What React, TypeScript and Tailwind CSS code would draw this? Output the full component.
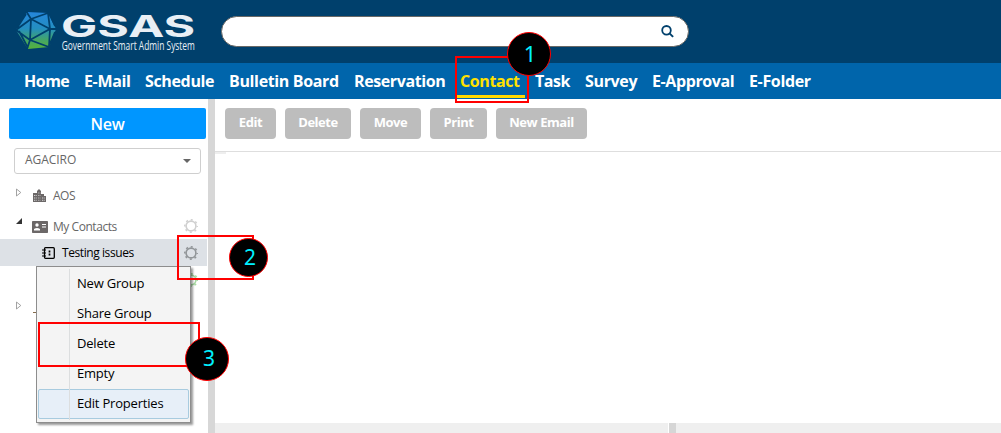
import type { ReactNode } from "react";

const navItems = [
  { label: "Home", width: "w-[60px]", tracking: "tracking-[-0.5px]" },
  { label: "E-Mail", width: "w-[61px]", tracking: "tracking-[-0.35px]" },
  { label: "Schedule", width: "w-[84px]", tracking: "tracking-[-0.35px]" },
  { label: "Bulletin Board", width: "w-[125px]", tracking: "tracking-[-0.35px]" },
  { label: "Reservation", width: "w-[106px]", tracking: "tracking-[-0.4px]" },
  { label: "Contact", width: "w-[75px]", active: true, tracking: "tracking-[-0.4px]" },
  { label: "Task", width: "w-[50px]", tracking: "tracking-[-0.5px]" },
  { label: "Survey", width: "w-[67px]", tracking: "tracking-[-0.35px]" },
  { label: "E-Approval", width: "w-[97px]", tracking: "tracking-[-0.4px]" },
  { label: "E-Folder", width: "w-[80px]", tracking: "tracking-[-0.35px]" },
];

const actions = [
  { label: "Edit", width: "w-[51px]" },
  { label: "Delete", width: "w-[66px]" },
  { label: "Move", width: "w-[61px]" },
  { label: "Print", width: "w-[57px]" },
  { label: "New Email", width: "w-[91px]" },
];

const menuItems = ["New Group", "Share Group", "Delete", "Empty", "Edit Properties"];

function LogoMark() {
  return (
    <svg className="h-10 w-[42px] shrink-0" viewBox="0 0 42 40">
      <defs>
        <linearGradient id="mark" x1="0" y1="0" x2="0" y2="1">
          <stop offset="0" stopColor="#2586dc" />
          <stop offset="0.45" stopColor="#248fc0" />
          <stop offset="0.75" stopColor="#43a568" />
          <stop offset="1" stopColor="#57b33a" />
        </linearGradient>
      </defs>
      <path d="M12 2 33 3 41 19 34 37 13 39 1 20Z" fill="url(#mark)" />
      <g fill="none" stroke="#00406c" strokeWidth="1.8">
        <path d="M11 1 16 9 33 3M16 9 1 20M16 9 35 19 33 3M16 9 15 30 35 19 42 19M15 30 1 20M15 30 12 39M15 30 34 37 35 19M4 21 13 38M2 18 11 4M35 5 40 16M40 22 35 34" />
      </g>
    </svg>
  );
}

function Gear({ color }: { color: string }) {
  return (
    <svg className="size-4" viewBox="0 0 16 16" fill="none" stroke={color}>
      <circle cx="8" cy="8" r="4.9" strokeWidth="1.6" />
      <circle cx="8" cy="8" r="6.2" strokeWidth="1.6" strokeDasharray="2 2.87" strokeDashoffset="1" />
    </svg>
  );
}

function Badge({ children, place }: { children: ReactNode; place: string }) {
  return (
    <div className={`absolute flex items-center justify-center rounded-full border border-[#f00] bg-black font-['Noto_Sans',sans-serif] text-[#00f0ff] ${place}`}>
      {children}
    </div>
  );
}

function Collapsed() {
  return (
    <svg className="h-[9px] w-[6px]" viewBox="0 0 6 9">
      <path d="M.5 1v7L4.8 4.5Z" fill="none" stroke="#999" strokeWidth=".9" />
    </svg>
  );
}

function Sidebar() {
  return (
    <aside className="flex w-[208px] shrink-0 flex-col text-[12px] text-[#666]">
      <button className="mt-[9px] ml-[9px] h-[31px] w-[197px] rounded-[2px] bg-[#0096ff] text-[16px] font-semibold leading-[32px] tracking-[-0.3px] text-white">New</button>
      <div className="mt-[9px] ml-[14px] flex h-[26px] w-[187px] items-center justify-between rounded-[3px] border border-[#cfcfcf] pr-[9px] pb-[3px] pl-[10px]">
        <span className="tracking-[-0.05px]">AGACIRO</span>
        <svg className="mt-[2px] h-1 w-2" viewBox="0 0 8 4"><path d="M0 0h8L4 4Z" fill="#666" /></svg>
      </div>
      <div className="mt-[6px] flex h-[31px] items-center pl-4">
        <div className="mb-[7px] w-[17px]"><Collapsed /></div>
        <svg className="h-[13px] w-[13px]" viewBox="0 0 13 13">
          <path d="M0 4h4V2l2-2 2 2v3h3v2h2v6H0Z" fill="#6c6868" />
          <path d="M1 6.5h3M1 9h3M1 11.3h3M5.4 4h2M5.4 6.5h2M5.4 9h2M5.4 11.3h2M9 9h3M9 11.3h3" stroke="#fff" strokeWidth=".8" strokeDasharray=".9 .8" />
        </svg>
        <span className="ml-[7px] font-medium tracking-[-0.5px]">AOS</span>
      </div>
      <div className="flex h-[28px] items-center pl-4">
        <svg className="mb-[9px] h-[6px] w-[6px]" viewBox="0 0 6 6"><path d="M6 0v6H0Z" fill="#333" /></svg>
        <svg className="mt-[3px] ml-[10px] h-[12px] w-4" viewBox="0 0 16 12">
          <rect width="16" height="12" rx=".7" fill="#6c6868" />
          <circle cx="5" cy="4" r="1.7" fill="#fff" />
          <path d="M2 9.5V8q3-2 6 0v1.5ZM10 3h4v1h-4ZM10 5.5h4v1h-4Z" fill="#fff" />
        </svg>
        <span className="mt-[3px] ml-[5px] w-[130px] font-medium tracking-[-0.45px]">My Contacts</span>
        <div className="mt-[2px]"><Gear color="#d0d0d0" /></div>
      </div>
      <div className="flex h-[27px] w-[207px] items-center bg-[#dde1e6] pl-[42px] text-black">
        <svg className="mt-px h-[12px] w-[13px]" viewBox="0 0 13 12" fill="none" stroke="#000">
          <rect x="2.5" y=".7" width="9.8" height="10.6" rx="1" strokeWidth="1.3" />
          <path d="M0 3h4M0 6h4M0 9h4" strokeWidth="1.2" />
          <path d="M7.5 3.5v2M7.5 6.5v2" strokeWidth="1.7" />
        </svg>
        <span className="ml-[7px] w-[121px] font-medium tracking-[-0.42px]">Testing issues</span>
        <Gear color="#929699" />
      </div>
      <div className="flex h-[27px] items-center pl-[183px]"><Gear color="#a7d8a2" /></div>
      <div className="flex h-6 items-center pl-4">
        <div className="w-[17px]"><Collapsed /></div>
        <div className="mt-[14px] h-px w-3 bg-[#856b4b]" />
      </div>
    </aside>
  );
}

function ContextMenu() {
  return (
    <div className="absolute top-[266px] left-[36px] h-[157px] w-[155px] border border-[#8d8d8d] bg-[#f4f4f4] p-px pt-[2px] text-[13px] tracking-[-0.2px] text-black shadow-[2px_2px_2px_rgba(0,0,0,0.4)]">
      {menuItems.map((item) => (
        <div key={item} className={`flex h-[30px] items-center border pl-[38px] last:h-[33px] ${item === "Edit Properties" ? "rounded-[2px] border-[#a8cbdf] bg-[#e7eff8] pb-px" : "border-transparent"}`}>
          {item}
        </div>
      ))}
      <div className="absolute top-[2px] left-[32px] h-[151px] w-px bg-[#dcdedf]" />
    </div>
  );
}

export default function App() {
  return (
    <div className="relative flex h-[433px] w-[1001px] flex-col overflow-hidden bg-white font-['Open_Sans',sans-serif]">
      <header className="flex h-[63px] shrink-0 bg-[#00406c]">
        <div className="flex w-[221px] pt-[10px] pl-[15px]">
          <LogoMark />
          <div className="ml-[4px] h-[45px] w-[140px] text-[#e9eff5]">
            <div className="h-[28px] w-[82px] origin-left scale-x-[1.61] pt-[3px] font-['Inter',sans-serif] text-[30px] font-bold leading-[26px]">GSAS</div>
            <div className="w-[190px] origin-left scale-x-[0.7] pt-px pl-px whitespace-nowrap text-[12px] leading-[14px]">Government Smart Admin System</div>
          </div>
        </div>
        <div className="mt-4 flex h-[31px] w-[468px] items-center justify-end rounded-full border border-[#686866] bg-white pr-[14px]">
          <svg className="h-[13px] w-[13px]" viewBox="0 0 13 13" fill="none" stroke="#00406c" strokeWidth="1.8">
            <circle cx="5.5" cy="5.3" r="4.3" /><path d="m8.5 8.4 3.6 3.5" strokeWidth="2" />
          </svg>
        </div>
      </header>
      <nav className="flex h-9 shrink-0 bg-[#0065ab] pl-6 text-[16px] font-bold leading-[37px] text-white">
        {navItems.map((item) => (
          <a key={item.label} className={`whitespace-nowrap ${item.width} ${item.tracking} ${item.active ? "text-[#ffe100]" : ""}`}>{item.label}</a>
        ))}
      </nav>
      <div className="flex min-h-0 flex-1">
        <Sidebar />
        <div className="w-[7px] shrink-0 bg-[#d7d7d7]" />
        <main className="flex flex-1 flex-col">
          <div className="flex h-[53px] shrink-0 gap-[9px] border-b border-[#dedede] pt-[9px] pl-[10px]">
            {actions.map((item) => (
              <button key={item.label} className={`h-[31px] rounded-[4px] bg-[#bdbdbd] pb-[2px] text-[13px] font-bold tracking-[-0.45px] whitespace-nowrap text-white ${item.width}`}>{item.label}</button>
            ))}
          </div>
          <div className="h-[2px] w-[11px] bg-[#eeeeee]" />
          <div className="mt-auto flex h-[10px] bg-[#efefef] pl-[453px]">
            <div className="w-[8px] border-l border-white bg-[#d6d6d6]" />
          </div>
        </main>
      </div>
      <ContextMenu />
      <div className="absolute top-[95px] left-[457px] h-[3px] w-[68px] bg-[#ffd900]" />
      <div className="absolute top-[56px] left-[455px] h-[47px] w-[74px] border-2 border-[#f00]" />
      <div className="absolute top-[235px] left-[177px] h-[45px] w-[77px] border-2 border-[#f00]" />
      <div className="absolute top-[322px] left-[38px] h-[45px] w-[162px] border-2 border-[#f00]" />
      <Badge place="top-[32px] left-[507px] size-[44px] pb-[2px] pl-[2px] text-[22px]">1</Badge>
      <Badge place="top-[238px] left-[229px] size-[39px] pl-[3px] text-[21px]">2</Badge>
      <Badge place="top-[337px] left-[185px] size-[44px] pl-1 text-[21px]">3</Badge>
    </div>
  );
}
